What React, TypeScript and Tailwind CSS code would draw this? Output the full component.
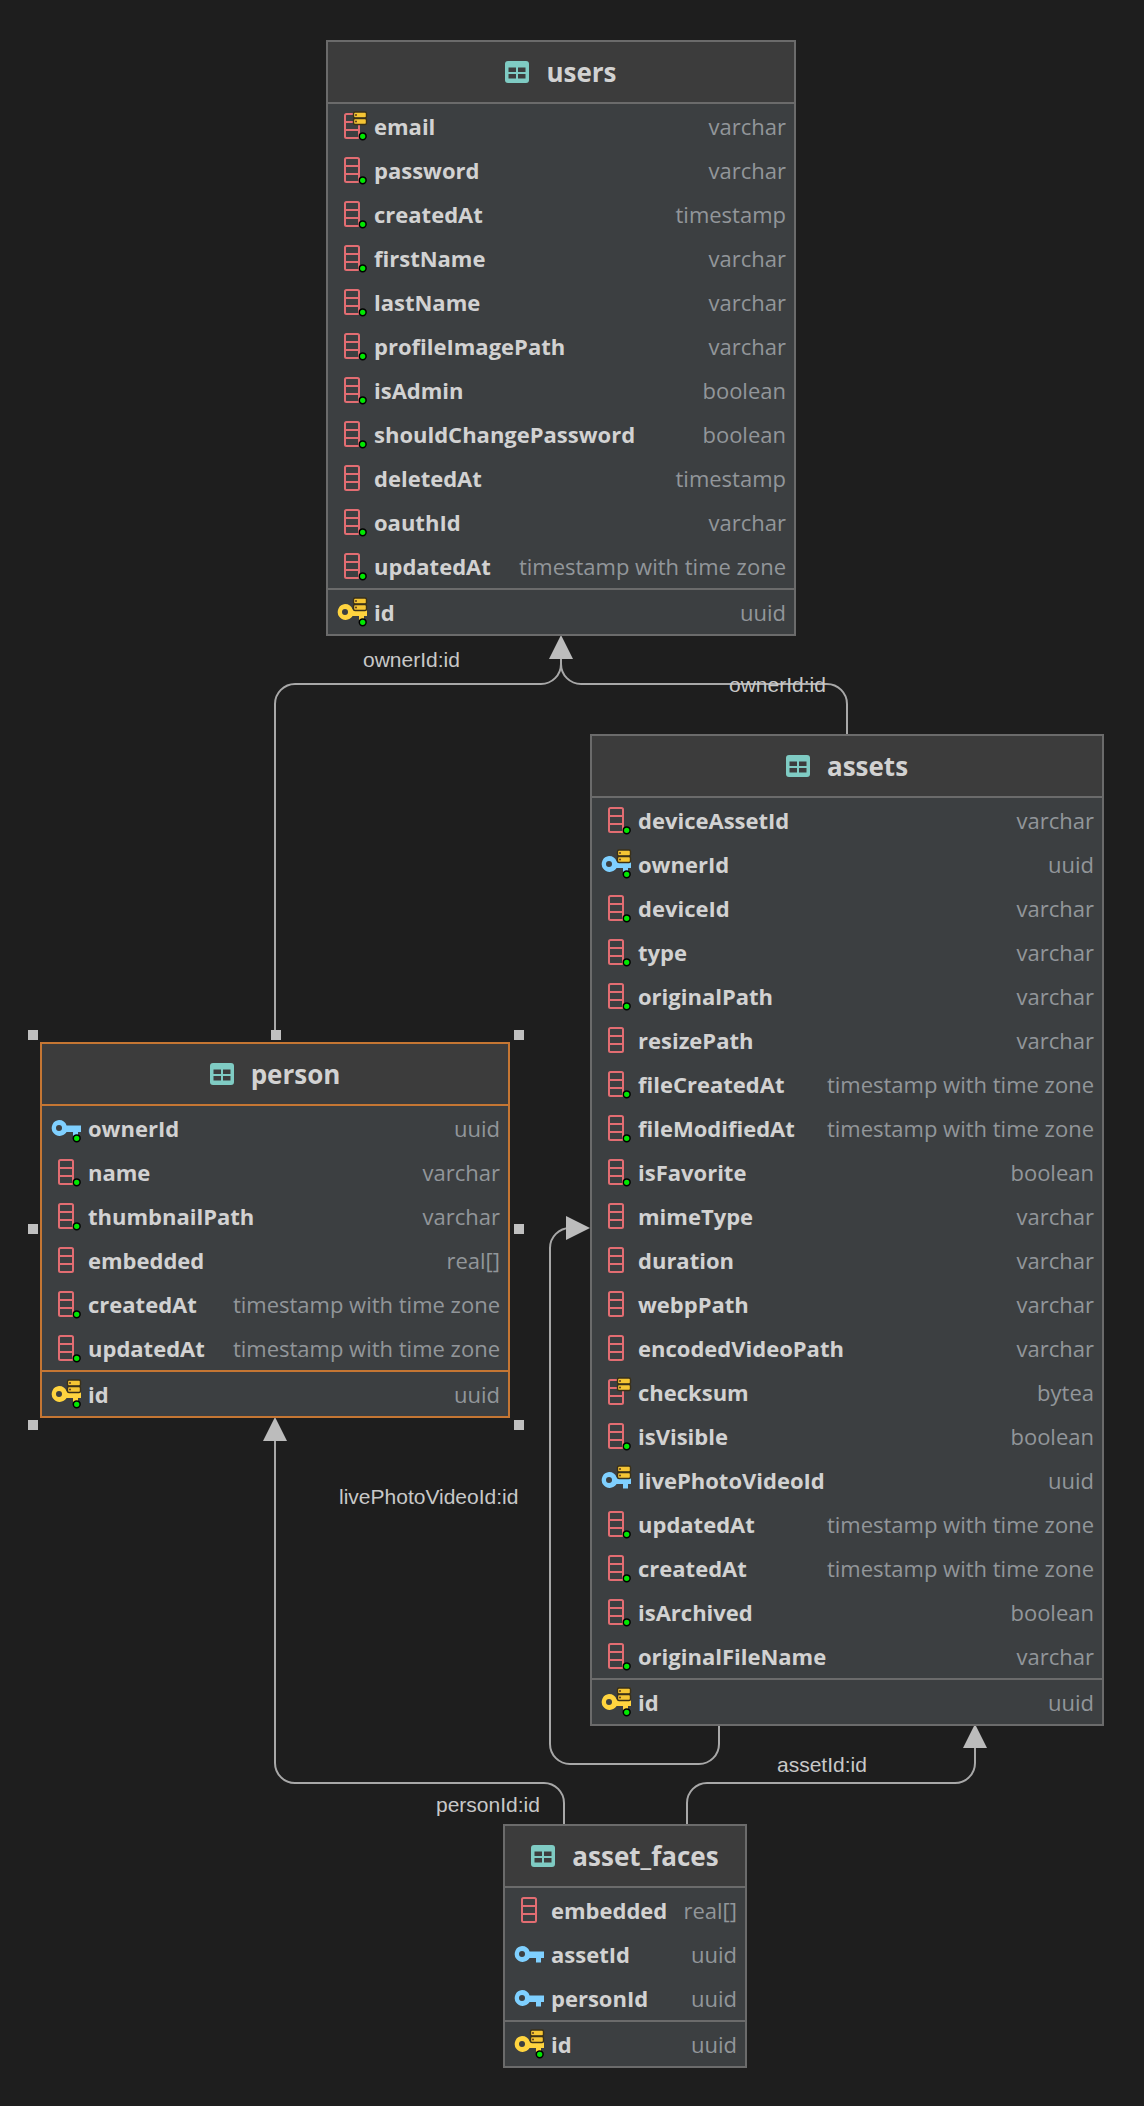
type Kind = 'col' | 'fk' | 'pk'

type Field = {
  name: string
  type: string
  kind?: Kind
  notNull?: boolean
  indexed?: boolean
}

type Table = {
  name: string
  position: string
  border: string
  fields: Field[]
  id: Field
}

const idField: Field = { name: 'id', type: 'uuid', kind: 'pk', notNull: true, indexed: true }
const tz = 'timestamp with time zone'

const tables: Table[] = [
  {
    name: 'users',
    position: 'left-[326px] top-[40px] w-[470px]',
    border: 'border-[#6b6b6b]',
    fields: [
      { name: 'email', type: 'varchar', notNull: true, indexed: true },
      { name: 'password', type: 'varchar', notNull: true },
      { name: 'createdAt', type: 'timestamp', notNull: true },
      { name: 'firstName', type: 'varchar', notNull: true },
      { name: 'lastName', type: 'varchar', notNull: true },
      { name: 'profileImagePath', type: 'varchar', notNull: true },
      { name: 'isAdmin', type: 'boolean', notNull: true },
      { name: 'shouldChangePassword', type: 'boolean', notNull: true },
      { name: 'deletedAt', type: 'timestamp' },
      { name: 'oauthId', type: 'varchar', notNull: true },
      { name: 'updatedAt', type: tz, notNull: true },
    ],
    id: idField,
  },
  {
    name: 'assets',
    position: 'left-[590px] top-[734px] w-[514px]',
    border: 'border-[#6b6b6b]',
    fields: [
      { name: 'deviceAssetId', type: 'varchar', notNull: true },
      { name: 'ownerId', type: 'uuid', kind: 'fk', notNull: true, indexed: true },
      { name: 'deviceId', type: 'varchar', notNull: true },
      { name: 'type', type: 'varchar', notNull: true },
      { name: 'originalPath', type: 'varchar', notNull: true },
      { name: 'resizePath', type: 'varchar' },
      { name: 'fileCreatedAt', type: tz, notNull: true },
      { name: 'fileModifiedAt', type: tz, notNull: true },
      { name: 'isFavorite', type: 'boolean', notNull: true },
      { name: 'mimeType', type: 'varchar' },
      { name: 'duration', type: 'varchar' },
      { name: 'webpPath', type: 'varchar' },
      { name: 'encodedVideoPath', type: 'varchar' },
      { name: 'checksum', type: 'bytea', indexed: true },
      { name: 'isVisible', type: 'boolean', notNull: true },
      { name: 'livePhotoVideoId', type: 'uuid', kind: 'fk', indexed: true },
      { name: 'updatedAt', type: tz, notNull: true },
      { name: 'createdAt', type: tz, notNull: true },
      { name: 'isArchived', type: 'boolean', notNull: true },
      { name: 'originalFileName', type: 'varchar', notNull: true },
    ],
    id: idField,
  },
  {
    name: 'person',
    position: 'left-[40px] top-[1042px] w-[470px]',
    border: 'border-[#c57633]',
    fields: [
      { name: 'ownerId', type: 'uuid', kind: 'fk', notNull: true },
      { name: 'name', type: 'varchar', notNull: true },
      { name: 'thumbnailPath', type: 'varchar', notNull: true },
      { name: 'embedded', type: 'real[]' },
      { name: 'createdAt', type: tz, notNull: true },
      { name: 'updatedAt', type: tz, notNull: true },
    ],
    id: idField,
  },
  {
    name: 'asset_faces',
    position: 'left-[503px] top-[1824px] w-[244px]',
    border: 'border-[#6b6b6b]',
    fields: [
      { name: 'embedded', type: 'real[]' },
      { name: 'assetId', type: 'uuid', kind: 'fk' },
      { name: 'personId', type: 'uuid', kind: 'fk' },
    ],
    id: idField,
  },
]

function TableGlyph() {
  return (
    <svg width="24" height="22" viewBox="0 0 24 22" className="shrink-0">
      <rect width="24" height="22" rx="3" fill="#7fcbc3" />
      <path d="M3.5 6.5h7.5v4.5h-7.5zM13 6.5h7.5v4.5h-7.5zM3.5 13h7.5v4.5h-7.5zM13 13h7.5v4.5h-7.5z" fill="#3c3c3c" />
    </svg>
  )
}

function FieldIcon({ field }: { field: Field }) {
  const kind = field.kind ?? 'col'
  const keyColor = kind === 'pk' ? '#ffd43f' : '#7fd0ff'
  return (
    <svg width="34" height="36" viewBox="0 0 34 36" className="shrink-0">
      {kind === 'col' ? (
        <g fill="none" stroke="#e26d72" strokeWidth="2">
          <rect x="11" y="6" width="14" height="24" rx="1.5" />
          <path d="M11 14h14M11 22h14" />
        </g>
      ) : (
        <g fill={keyColor}>
          <path
            fillRule="evenodd"
            d="M11 10a8 8 0 0 1 7.6 5.5H33v6.500h-3v4.500h-5v-4.500h-6.400A8 8 0 1 1 11 10zm0 5a3 3 0 1 0 0 6 3 3 0 0 0 0-6z"
          />
        </g>
      )}
      {field.indexed && (
        <g>
          <rect x="19.500" y="4" width="13" height="6" rx="1.500" fill="#f5c534" stroke="#3a3018" strokeWidth="1.400" />
          <rect x="19.500" y="10.500" width="13" height="6" rx="1.500" fill="#f5c534" stroke="#3a3018" strokeWidth="1.400" />
          <circle cx="22" cy="7" r="1" fill="#5a3a20" />
          <circle cx="22" cy="13.500" r="1" fill="#5a3a20" />
        </g>
      )}
      {field.notNull && <circle cx="28.700" cy="28.300" r="3.400" fill="#00e800" stroke="#000000" strokeWidth="1.500" />}
    </svg>
  )
}

function Row({ field }: { field: Field }) {
  return (
    <div className="flex h-[44px] items-center pl-[6px] pr-[8px]">
      <FieldIcon field={field} />
      <span className="ml-[6px] whitespace-nowrap text-[22px] font-bold text-[#d2d2d2]">{field.name}</span>
      <span className="ml-auto whitespace-nowrap pl-[12px] text-[22px] text-[#92969a]">{field.type}</span>
    </div>
  )
}

function TableNode({ table }: { table: Table }) {
  return (
    <div className={`absolute border-2 bg-[#3c3f41] ${table.position} ${table.border}`}>
      <div className={`flex h-[60px] items-center justify-center gap-[17px] border-b-0 bg-[#3c3c3c]`}>
        <TableGlyph />
        <span className="text-[26px] font-bold text-[#d2d2d2]">{table.name}</span>
      </div>
      <div className={`border-t-2 ${table.border}`}>
        {table.fields.map((field) => (
          <Row key={field.name} field={field} />
        ))}
      </div>
      <div className={`border-t-2 ${table.border}`}>
        <Row field={table.id} />
      </div>
    </div>
  )
}

const handles = [
  'left-[28px] top-[1030px]',
  'left-[271px] top-[1030px]',
  'left-[514px] top-[1030px]',
  'left-[28px] top-[1224px]',
  'left-[514px] top-[1224px]',
  'left-[28px] top-[1420px]',
  'left-[514px] top-[1420px]',
]

const labels = [
  { text: 'ownerId:id', position: 'left-[363px] top-[648px]' },
  { text: 'ownerId:id', position: 'left-[729px] top-[673px]' },
  { text: 'livePhotoVideoId:id', position: 'left-[339px] top-[1485px]' },
  { text: 'personId:id', position: 'left-[436px] top-[1793px]' },
  { text: 'assetId:id', position: 'left-[777px] top-[1753px]' },
]

function Connectors() {
  return (
    <svg width="1144" height="2106" viewBox="0 0 1144 2106" className="absolute left-0 top-0">
      <g fill="none" stroke="#a8a8a8" strokeWidth="2">
        <path d="M275 1036V704a20 20 0 0 1 20-20h246a20 20 0 0 0 20-20v-8" />
        <path d="M561 656v8a20 20 0 0 0 20 20h246a20 20 0 0 1 20 20v30" />
        <path d="M275 1438v325a20 20 0 0 0 20 20h249a20 20 0 0 1 20 20v21" />
        <path d="M687 1824v-21a20 20 0 0 1 20-20h248a20 20 0 0 0 20-20v-17" />
        <path d="M719 1722v22a20 20 0 0 1-20 20h-129a20 20 0 0 1-20-20v-496a20 20 0 0 1 20-20h-4" />
      </g>
      <g fill="#bcbcbc">
        <path d="M561 635l12 24h-24z" />
        <path d="M275 1417l12 24h-24z" />
        <path d="M975 1724l12 24h-24z" />
        <path d="M590 1228l-24 12v-24z" />
      </g>
    </svg>
  )
}

export default function App() {
  return (
    <div className="relative h-[2106px] w-[1144px] overflow-hidden bg-[#1e1e1e] font-['Open_Sans',sans-serif]">
      <Connectors />
      {tables.map((table) => (
        <TableNode key={table.name} table={table} />
      ))}
      {handles.map((position) => (
        <div key={position} className={`absolute h-[10px] w-[10px] bg-[#c0c0c0] ${position}`} />
      ))}
      {labels.map((label) => (
        <span
          key={label.position}
          className={`absolute whitespace-nowrap font-['Liberation_Sans',sans-serif] text-[21px] leading-[24px] text-[#c8c8c8] ${label.position}`}
        >
          {label.text}
        </span>
      ))}
    </div>
  )
}
